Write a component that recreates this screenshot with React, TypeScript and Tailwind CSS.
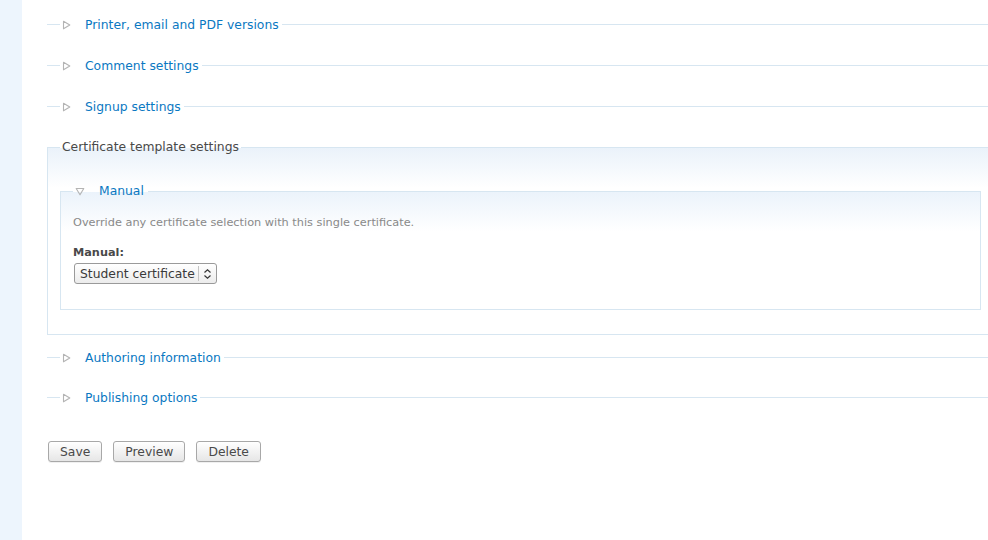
import React from "react";

const font = { fontFamily: '"DejaVu Sans", Verdana, sans-serif' };

function ArrowRight() {
  return (
    <svg width="9" height="10" viewBox="0 0 9 10" className="shrink-0">
      <path d="M1.5 1.2 L7.8 5 L1.5 8.8 Z" fill="none" stroke="#b4b4b4" strokeWidth="1.1" strokeLinejoin="round" />
    </svg>
  );
}

function ArrowDown() {
  return (
    <svg width="10" height="9" viewBox="0 0 10 9" className="shrink-0">
      <path d="M1.2 1.5 L8.8 1.5 L5 7.8 Z" fill="none" stroke="#b4b4b4" strokeWidth="1.1" strokeLinejoin="round" />
    </svg>
  );
}

function Collapsed({ title }: { title: string }) {
  return (
    <div className="flex h-[41px] items-center">
      <div className="h-px w-[13px] bg-[#d7e6f1]" />
      <div className="flex items-center pl-[2px] pr-[3px]">
        <ArrowRight />
        <span className="ml-[14px] whitespace-nowrap text-[12.35px] leading-[18px] text-[#0a78c2]">{title}</span>
      </div>
      <div className="h-px flex-1 bg-[#d7e6f1]" />
    </div>
  );
}

function Button({ label }: { label: string }) {
  return (
    <button className="h-[21px] rounded-[3px] border border-[#a8a8a8] bg-gradient-to-b from-white to-[#e6e6e6] px-[11px] text-[12.35px] leading-[18px] text-[#494949] shadow-[0_1px_0_#f0f0f0]">
      {label}
    </button>
  );
}

export default function App() {
  return (
    <div className="flex h-[540px] w-[988px] overflow-hidden bg-white" style={font}>
      <div className="w-[22px] shrink-0 bg-[#edf5fd]" />
      <div className="w-[972px] shrink-0 pl-[25px] pt-[4px]">
        <Collapsed title="Printer, email and PDF versions" />
        <Collapsed title="Comment settings" />
        <Collapsed title="Signup settings" />

        <fieldset className="mt-[11px] w-[947px] border border-[#d7e6f1] bg-gradient-to-b from-[#eaf2fa] to-white to-[40px] px-[12px] pb-[24px] pt-[4px]">
          <legend className="px-[2px] text-[12.35px] leading-[18px] text-[#494949]">
            Certificate template settings
          </legend>

          <fieldset className="mt-[22px] border border-[#d7e6f1] bg-gradient-to-b from-[#ebf3fb] to-white to-[40px] px-[12px] pb-[25px] pt-[4px]">
            <legend className="flex items-center px-[2px] text-[12.35px] leading-[18px]">
              <ArrowDown />
              <span className="ml-[14px] pr-[2px] text-[#0a78c2]">Manual</span>
            </legend>
            <p className="mt-[12px] whitespace-nowrap text-[11.3px] leading-[14px] text-[#898989]">
              Override any certificate selection with this single certificate.
            </p>
            <div className="mt-[15px] text-[11.3px] font-bold leading-[15px] text-[#494949]">Manual:</div>
            <div className="mt-[3px] ml-px flex h-[21px] w-[143px] items-center rounded-[3px] border border-[#9a9a9a] bg-gradient-to-b from-white to-[#ececec] text-[12.35px] text-[#3a3a3a]">
              <span className="flex-1 whitespace-nowrap pl-[5px] leading-[18px]">Student certificate</span>
              <div className="h-[15px] w-px bg-[#c4c4c4]" />
              <svg width="17" height="12" viewBox="0 0 17 12" className="shrink-0">
                <path d="M5.5 4.5 L8.5 1.8 L11.5 4.5 M5.5 7.5 L8.5 10.2 L11.5 7.5" fill="none" stroke="#333" strokeWidth="1.2" />
              </svg>
            </div>
          </fieldset>
        </fieldset>

        <div className="mt-[2px]">
          <Collapsed title="Authoring information" />
        </div>
        <div className="-mt-px">
          <Collapsed title="Publishing options" />
        </div>

        <div className="mt-[23px] flex gap-[11px] pl-px">
          <Button label="Save" />
          <Button label="Preview" />
          <Button label="Delete" />
        </div>
      </div>
    </div>
  );
}
